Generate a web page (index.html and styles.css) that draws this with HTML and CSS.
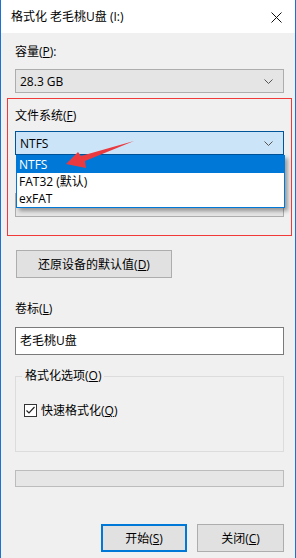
FILE: index.html
```html
<!DOCTYPE html>
<html lang="zh-CN">
<head>
<meta charset="UTF-8">
<title>格式化 老毛桃U盘 (I:)</title>
<link rel="stylesheet" href="styles.css">
</head>
<body>
<div class="window">
    <div class="titlebar">
        <span class="title">格式化 老毛桃U盘 (I:)</span>
        <svg class="close" width="11" height="11" viewBox="0 0 11 11"><path d="M0.5 0.5 L10.5 10.5 M10.5 0.5 L0.5 10.5" stroke="#111" stroke-width="1" fill="none"/></svg>
    </div>
    <div class="content">
        <div class="label first">容量(<u>P</u>):</div>
        <div class="combo">
            <span>28.3 GB</span>
            <svg class="chev" width="9" height="5" viewBox="0 0 9 5"><path d="M0.5 0.5 L4.5 4.5 L8.5 0.5" stroke="#555" fill="none"/></svg>
        </div>

        <div class="label">文件系统(<u>F</u>)</div>
        <div class="combo focus">
            <span>NTFS</span>
            <svg class="chev" width="9" height="5" viewBox="0 0 9 5"><path d="M0.5 0.5 L4.5 4.5 L8.5 0.5" stroke="#555" fill="none"/></svg>
        </div>

        <!-- covered by the open list -->
        <div class="label covered">分配单元大小(<u>A</u>)</div>
        <div class="combo">
            <span class="covered">4096 字节</span>
        </div>

        <button class="btn restore">还原设备的默认值(<u>D</u>)</button>

        <div class="label vol">卷标(<u>L</u>)</div>
        <div class="input">老毛桃U盘</div>

        <div class="group">
            <span class="legend">格式化选项(<u>O</u>)</span>
            <div class="check-row">
                <span class="checkbox">
                    <svg width="11" height="11" viewBox="0 0 11 11"><path d="M1.5 5.5 L4 8 L9.5 2" stroke="#222" stroke-width="1.2" fill="none"/></svg>
                </span>
                <span>快速格式化(<u>Q</u>)</span>
            </div>
        </div>

        <div class="progress"></div>

        <div class="actions">
            <button class="btn default">开始(<u>S</u>)</button>
            <button class="btn">关闭(<u>C</u>)</button>
        </div>
    </div>

    <div class="dropdown">
        <div class="option selected">NTFS</div>
        <div class="option">FAT32 (默认)</div>
        <div class="option">exFAT</div>
    </div>

    <div class="highlight"></div>

    <svg class="arrow" width="296" height="558" viewBox="0 0 296 558">
        <polygon points="66,164 78,152 81,156 134,141 85,161 86,168" fill="#ea3a3f"/>
    </svg>
</div>
</body>
</html>
```

FILE: styles.css
```css
body {
    margin: 0;
    font-family: "Open Sans", "Noto Sans CJK SC", sans-serif;
    font-size: 12px;
    color: #000;
}

.window {
    position: relative;
    width: 294px;
    height: 558px;
    border-left: 1px solid #1a73d0;
    border-right: 1px solid #1a73d0;
    background-color: #f0f0f0;
    overflow: hidden;
}

.titlebar {
    height: 33px;
    background-color: #fff;
    display: flex;
    align-items: center;
    justify-content: space-between;
    padding: 0 13px 0 10px;
}

.title {
    font-size: 12px;
    margin-top: -1px;
}

.close {
    margin-top: 1px;
}

.content {
    padding: 0 11px 0 14px;
}

.label {
    height: 16px;
    line-height: 16px;
    margin-top: 15px;
    margin-bottom: 7px;
}

.label.first {
    margin-top: 11px;
    margin-bottom: 9px;
}

.label.vol {
    margin-top: 23px;
    margin-bottom: 10px;
}

.covered {
    visibility: hidden;
}

.combo {
    height: 22px;
    border: 1px solid #adadad;
    background-color: #e5e5e5;
    display: flex;
    align-items: center;
    justify-content: space-between;
    padding: 0 10px 0 4px;
}

.combo.focus {
    background-color: #cce4f7;
    border-color: #005499;
}

.btn {
    font-family: inherit;
    font-size: 12px;
    color: #000;
    background-color: #e1e1e1;
    border: 1px solid #adadad;
    height: 28px;
    padding: 0;
}

.restore {
    display: block;
    width: 156px;
    margin-top: 33px;
    margin-left: 1px;
}

.input {
    height: 26px;
    line-height: 26px;
    border: 1px solid #7a7a7a;
    background-color: #fff;
    padding: 0 4px;
}

.group {
    position: relative;
    margin-top: 21px;
    height: 74px;
    border: 1px solid #dcdcdc;
}

.legend {
    position: absolute;
    top: -9px;
    left: 6px;
    padding: 0 3px;
    background-color: #f0f0f0;
    line-height: 16px;
}

.check-row {
    display: flex;
    align-items: center;
    gap: 4px;
    margin: 24px 0 0 8px;
}

.checkbox {
    width: 11px;
    height: 11px;
    border: 1px solid #333;
    background-color: #fff;
    display: flex;
}

.progress {
    margin-top: 18px;
    height: 15px;
    border: 1px solid #bcbcbc;
    background-color: #e6e6e6;
}

.actions {
    display: flex;
    justify-content: flex-end;
    gap: 10px;
    margin-top: 37px;
}

.actions .btn {
    width: 87px;
}

.actions .default {
    width: 86px;
    border: 2px solid #0078d7;
}

.dropdown {
    position: absolute;
    top: 155px;
    left: 15px;
    width: 267px;
    border: 1px solid #0078d7;
    background-color: #fff;
    box-shadow: 3px 3px 4px rgba(0, 0, 0, 0.35);
}

.option {
    height: 17px;
    line-height: 17px;
    padding-left: 2px;
}

.option.selected {
    background-color: #0078d7;
    color: #fff;
}

.highlight {
    position: absolute;
    top: 98px;
    left: 6px;
    width: 283px;
    height: 136px;
    border: 1px solid #f03a3a;
}

.arrow {
    position: absolute;
    top: 0;
    left: -1px;
}
```
